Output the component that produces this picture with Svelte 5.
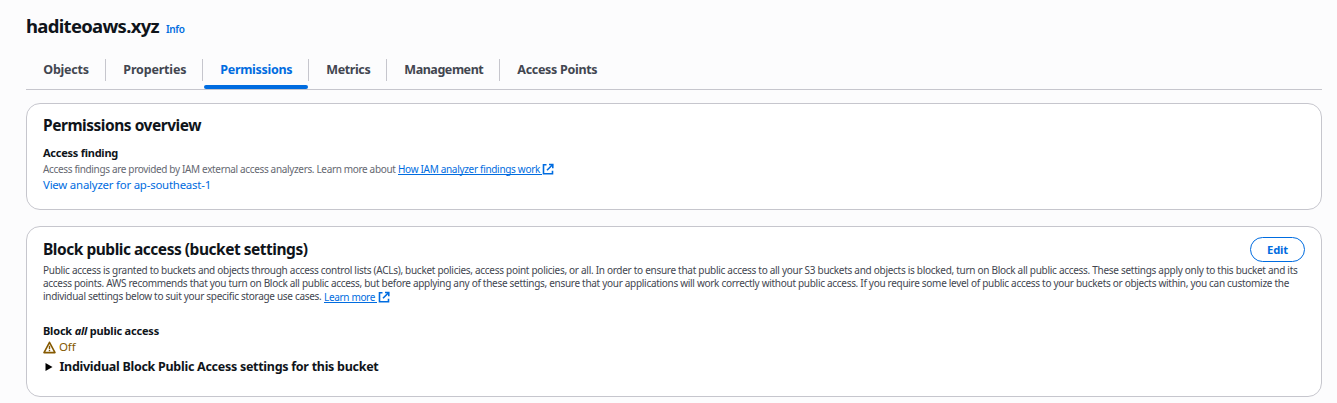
<script>
  const tabs = [
    { label: 'Objects', text: 45.5, width: 80 },
    { label: 'Properties', text: 63, width: 97 },
    { label: 'Permissions', text: 72, width: 106, active: true },
    { label: 'Metrics', text: 44, width: 78 },
    { label: 'Management', text: 79, width: 113 },
    { label: 'Access Points', text: 80, width: 114 }
  ];
  const description = [
    'Public access is granted to buckets and objects through access control lists (ACLs), bucket policies, access point policies, or all. In order to ensure that public access to all your S3 buckets and objects is blocked, turn on Block all public access. These settings apply only to this bucket and its',
    'access points. AWS recommends that you turn on Block all public access, but before applying any of these settings, ensure that your applications will work correctly without public access. If you require some level of public access to your buckets or objects within, you can customize the'
  ];
  const widths = [1254.5, 1246];

  // Tracks a single line of text so that it spans the requested width.
  function fit(node, width) {
    const apply = () => {
      node.style.letterSpacing = '0px';
      const natural = node.getBoundingClientRect().width;
      node.style.letterSpacing = (width - natural) / node.textContent.length + 'px';
    };
    apply();
    document.fonts.ready.then(apply);
  }
</script>

{#snippet external()}
  <svg class="external" viewBox="0 0 12 12" aria-hidden="true">
    <path d="M4.5 1.8H1.5v9h9v-3" />
    <path d="M7 1.5h3.8v3.8M5 7.3l5.5-5.5" />
  </svg>
{/snippet}

<main>
  <header>
    <h1 use:fit={133}>haditeoaws.xyz</h1>
    <a class="info" href="#info" use:fit={18.5}>Info</a>
  </header>

  <nav>
    {#each tabs as tab}
      <a href="#tab" class:active={tab.active} style:width="{tab.width}px"><span use:fit={tab.text}>{tab.label}</span></a>
    {/each}
  </nav>

  <section class="card overview">
    <h2><span use:fit={158}>Permissions overview</span></h2>
    <h3><span use:fit={75}>Access finding</span></h3>
    <p class="hint">
      <span use:fit={352.5}>Access findings are provided by IAM external access analyzers. Learn more about</span>
      <a class="underlined" href="#learn"><span use:fit={142}>How IAM analyzer findings work</span></a>{@render external()}
    </p>
    <a class="analyzer" href="#analyzer"><span use:fit={168}>View analyzer for ap-southeast-1</span></a>
  </section>

  <section class="card block">
    <div class="heading">
      <h2><span use:fit={264.5}>Block public access (bucket settings)</span></h2>
      <button><span use:fit={21}>Edit</span></button>
    </div>
    <div class="description">
      {#each description as line, i}
        <div><span use:fit={widths[i]}>{line}</span></div>
      {/each}
      <div class="last">
        <span use:fit={278.5}>individual settings below to suit your specific storage use cases.</span>
        <a class="underlined" href="#more"><span use:fit={51}>Learn more</span></a>{@render external()}
      </div>
    </div>
    <h3><span use:fit={116}>Block <em>all</em> public access</span></h3>
    <div class="status">
      <svg viewBox="0 0 13 13" aria-hidden="true">
        <path d="M6.5 1.3 1 11.6h11z" />
        <path class="mark" d="M6.5 4.7v3.2M6.5 8.8v1.5" />
      </svg>
      <span use:fit={16.5}>Off</span>
    </div>
    <div class="expander">
      <svg viewBox="0 0 8 8" aria-hidden="true"><path d="M.5 0v8L7.5 4z" /></svg>
      <span use:fit={319}>Individual Block Public Access settings for this bucket</span>
    </div>
  </section>
</main>

<style>
  :global(body) {
    background: #fcfcfd;
    overflow: hidden;
  }
  main {
    box-sizing: border-box;
    height: 403px;
    padding: 14px 15px 0 26px;
    font-family: 'Noto Sans', 'Open Sans', sans-serif;
    color: #0f141a;
    white-space: nowrap;
  }
  h1, h2, h3, p {
    margin: 0;
  }
  a {
    color: #006ce0;
    text-decoration: none;
  }
  header {
    display: flex;
    align-items: baseline;
    gap: 7px;
    height: 36px;
  }
  h1 {
    font-size: 18.5px;
    line-height: 24px;
    font-weight: 700;
  }
  .info {
    font-size: 10px;
    font-weight: 600;
  }
  nav {
    display: flex;
    height: 39px;
    border-bottom: 1px solid #c6c6cd;
  }
  nav a {
    position: relative;
    box-sizing: border-box;
    display: flex;
    padding-left: 17.3px;
    color: #424650;
    font-size: 12.5px;
    line-height: 39px;
    font-weight: 700;
  }
  nav a:not(:last-child)::after {
    content: '';
    position: absolute;
    right: 0;
    top: 9px;
    width: 1px;
    height: 22px;
    background: #c6c6cd;
  }
  nav a.active {
    color: #006ce0;
  }
  nav a.active::before {
    content: '';
    position: absolute;
    left: 1px;
    right: 1px;
    bottom: 0;
    height: 4px;
    border-radius: 2px;
    background: #006ce0;
  }
  .card {
    box-sizing: border-box;
    width: 1296px;
    border: 1px solid #c6c6cd;
    border-radius: 14px;
    background: #fff;
    padding-left: 16px;
  }
  .overview {
    height: 107px;
    margin-top: 13px;
    padding-top: 10px;
  }
  .block {
    height: 171px;
    margin-top: 16px;
    padding: 10px 16px 0;
  }
  h2 {
    font-size: 15.5px;
    line-height: 22px;
    font-weight: 700;
  }
  h3 {
    font-size: 11px;
    line-height: 16px;
    font-weight: 700;
  }
  .overview h3 {
    margin-top: 9px;
  }
  .hint, .last {
    display: flex;
    align-items: center;
  }
  .hint {
    height: 16px;
    color: #656871;
    font-size: 10px;
  }
  .underlined {
    height: 11px;
    line-height: 13px;
    margin-left: 2.5px;
    padding-right: 2px;
    border-bottom: 1px solid #006ce0;
  }
  .last .underlined {
    line-height: 12px;
  }
  .external {
    width: 12px;
    height: 12px;
    margin-left: 0;
    fill: none;
    stroke: #006ce0;
    stroke-width: 1.6;
  }
  .last .external {
    margin-left: .5px;
  }
  .analyzer {
    display: block;
    font-size: 11.4px;
    line-height: 16px;
  }
  .heading {
    display: flex;
    justify-content: space-between;
    height: 27px;
  }
  .heading h2 {
    margin-top: 1px;
  }
  button {
    width: 55px;
    height: 25px;
    padding: 0;
    border: 1px solid #006ce0;
    border-radius: 13px;
    background: #fff;
    color: #006ce0;
    font: 700 11.2px/22px 'Noto Sans', sans-serif;
  }
  .description {
    color: #424650;
    font-size: 10px;
    line-height: 13px;
  }
  .block h3 {
    margin-top: 20px;
  }
  .status {
    display: flex;
    align-items: center;
    gap: 3px;
    height: 16px;
    color: #855900;
    font-size: 11.5px;
    line-height: 14px;
  }
  .status svg {
    width: 13px;
    height: 13px;
    fill: none;
    stroke: #855900;
    stroke-width: 1.6;
    stroke-linejoin: round;
  }
  .status .mark {
    stroke-width: 1.4;
  }
  .expander {
    display: flex;
    align-items: center;
    height: 22px;
    padding-left: 2px;
    gap: 6.5px;
    font-size: 12.5px;
    font-weight: 700;
  }
  .expander svg {
    width: 8px;
    height: 8px;
    margin-top: 2px;
  }
</style>
